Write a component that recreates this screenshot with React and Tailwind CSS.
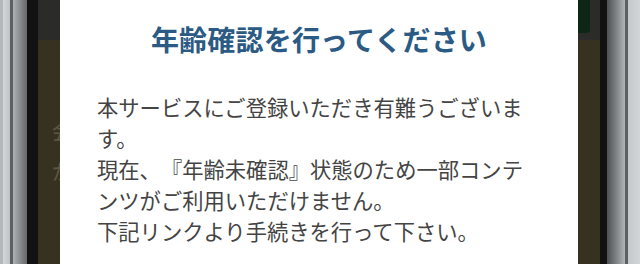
export default function App() {
  return (
    <div className="w-[640px] h-[264px] flex overflow-hidden bg-black font-['Noto_Sans_CJK_JP',sans-serif]">
      {/* left bezel */}
      <div className="w-[3px] bg-[#b4b8ba]" />
      <div className="w-[7px] bg-gradient-to-r from-[#d4d8da] to-[#bfc3c5]" />
      <div className="w-[3px] bg-[#5c6062]" />
      <div className="w-[14px] bg-gradient-to-r from-[#aeb2b4] to-[#66686a]" />
      <div className="w-[11px] bg-[#121212]" />

      {/* screen */}
      <div className="relative flex-1 flex flex-col bg-[#37321f]">
        <div className="h-[40px] bg-[#2b2b29] flex justify-end">
          <div className="w-[12px] h-[33px] mr-[10px] bg-[#0e2714] rounded-br-[4px]" />
        </div>
        <div className="flex-1 pl-[14px] pt-[70px] text-[21px] leading-[40px] text-[#5e5842]">
          <p>会</p>
          <p>が</p>
        </div>

        <div className="absolute left-[22px] top-0 w-[518px] h-[290px] bg-white">
          <h1 className="pt-[19px] text-center text-[28px] leading-[40px] font-bold text-[#2b5b84] tracking-[0.2px]">
            年齢確認を行ってください
          </h1>
          <p className="mt-[32px] pl-[37px] pr-[46px] text-[21.3px] leading-[31px] text-[#444444] [text-spacing-trim:space-all]">
            本サービスにご登録いただき有難うございます。
            <br />
            現在、『年齢未確認』状態のため一部コンテンツがご利用いただけません。
            <br />
            下記リンクより手続きを行って下さい。
          </p>
        </div>
      </div>

      {/* right bezel */}
      <div className="w-[7px] bg-[#111111]" />
      <div className="w-[18px] bg-gradient-to-r from-[#4e5052] to-[#b2b6b8]" />
      <div className="w-[3px] bg-[#5c6062]" />
      <div className="w-[12px] bg-gradient-to-r from-[#c4c8ca] to-[#d2d6d8]" />
    </div>
  );
}
